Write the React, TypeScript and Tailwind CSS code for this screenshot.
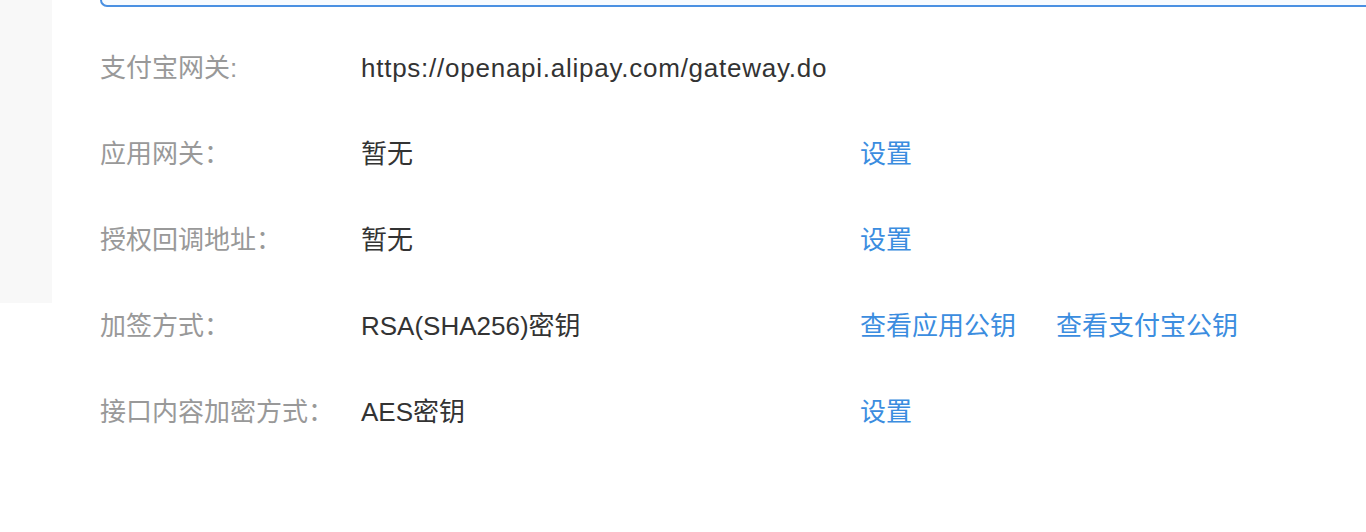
const rows: { label: string; value: string; actions: string[] }[] = [
  { label: '支付宝网关:', value: 'https://openapi.alipay.com/gateway.do', actions: [] },
  { label: '应用网关：', value: '暂无', actions: ['设置'] },
  { label: '授权回调地址：', value: '暂无', actions: ['设置'] },
  { label: '加签方式：', value: 'RSA(SHA256)密钥', actions: ['查看应用公钥', '查看支付宝公钥'] },
  { label: '接口内容加密方式：', value: 'AES密钥', actions: ['设置'] },
];

export default function App() {
  return (
    <div
      className="relative flex h-[532px] w-[1366px] overflow-hidden bg-white text-[26px]"
      style={{ fontFamily: '"Liberation Sans", "Noto Sans CJK SC", sans-serif' }}
    >
      {/* 左侧灰色栏 */}
      <div className="h-[303px] w-[52px] shrink-0 bg-[#f8f8f8]" />

      <div className="flex-1 pl-[48px]">
        {/* 顶部输入框的下沿 */}
        <div className="h-[7px] w-[1400px] rounded-bl-[10px] border-b-2 border-l-2 border-[#4a90e2] bg-[#f7fbff]" />

        <div className="pt-[18px]">
          {rows.map((row) => (
            <div key={row.label} className="flex h-[86px] items-center">
              <div className="w-[260px] shrink-0 text-[#999999]">{row.label}</div>
              <div
                className={
                  row.label === '支付宝网关:'
                    ? 'w-[500px] shrink-0 whitespace-nowrap pl-px tracking-[0.75px] text-[#333333]'
                    : 'w-[500px] shrink-0 whitespace-nowrap pl-px text-[#333333]'
                }
              >
                {row.value}
              </div>
              <div className="flex gap-[40px] text-[#3b8ddf]">
                {row.actions.map((a) => (
                  <span key={a} className="cursor-pointer">
                    {a}
                  </span>
                ))}
              </div>
            </div>
          ))}
        </div>
      </div>
    </div>
  );
}
